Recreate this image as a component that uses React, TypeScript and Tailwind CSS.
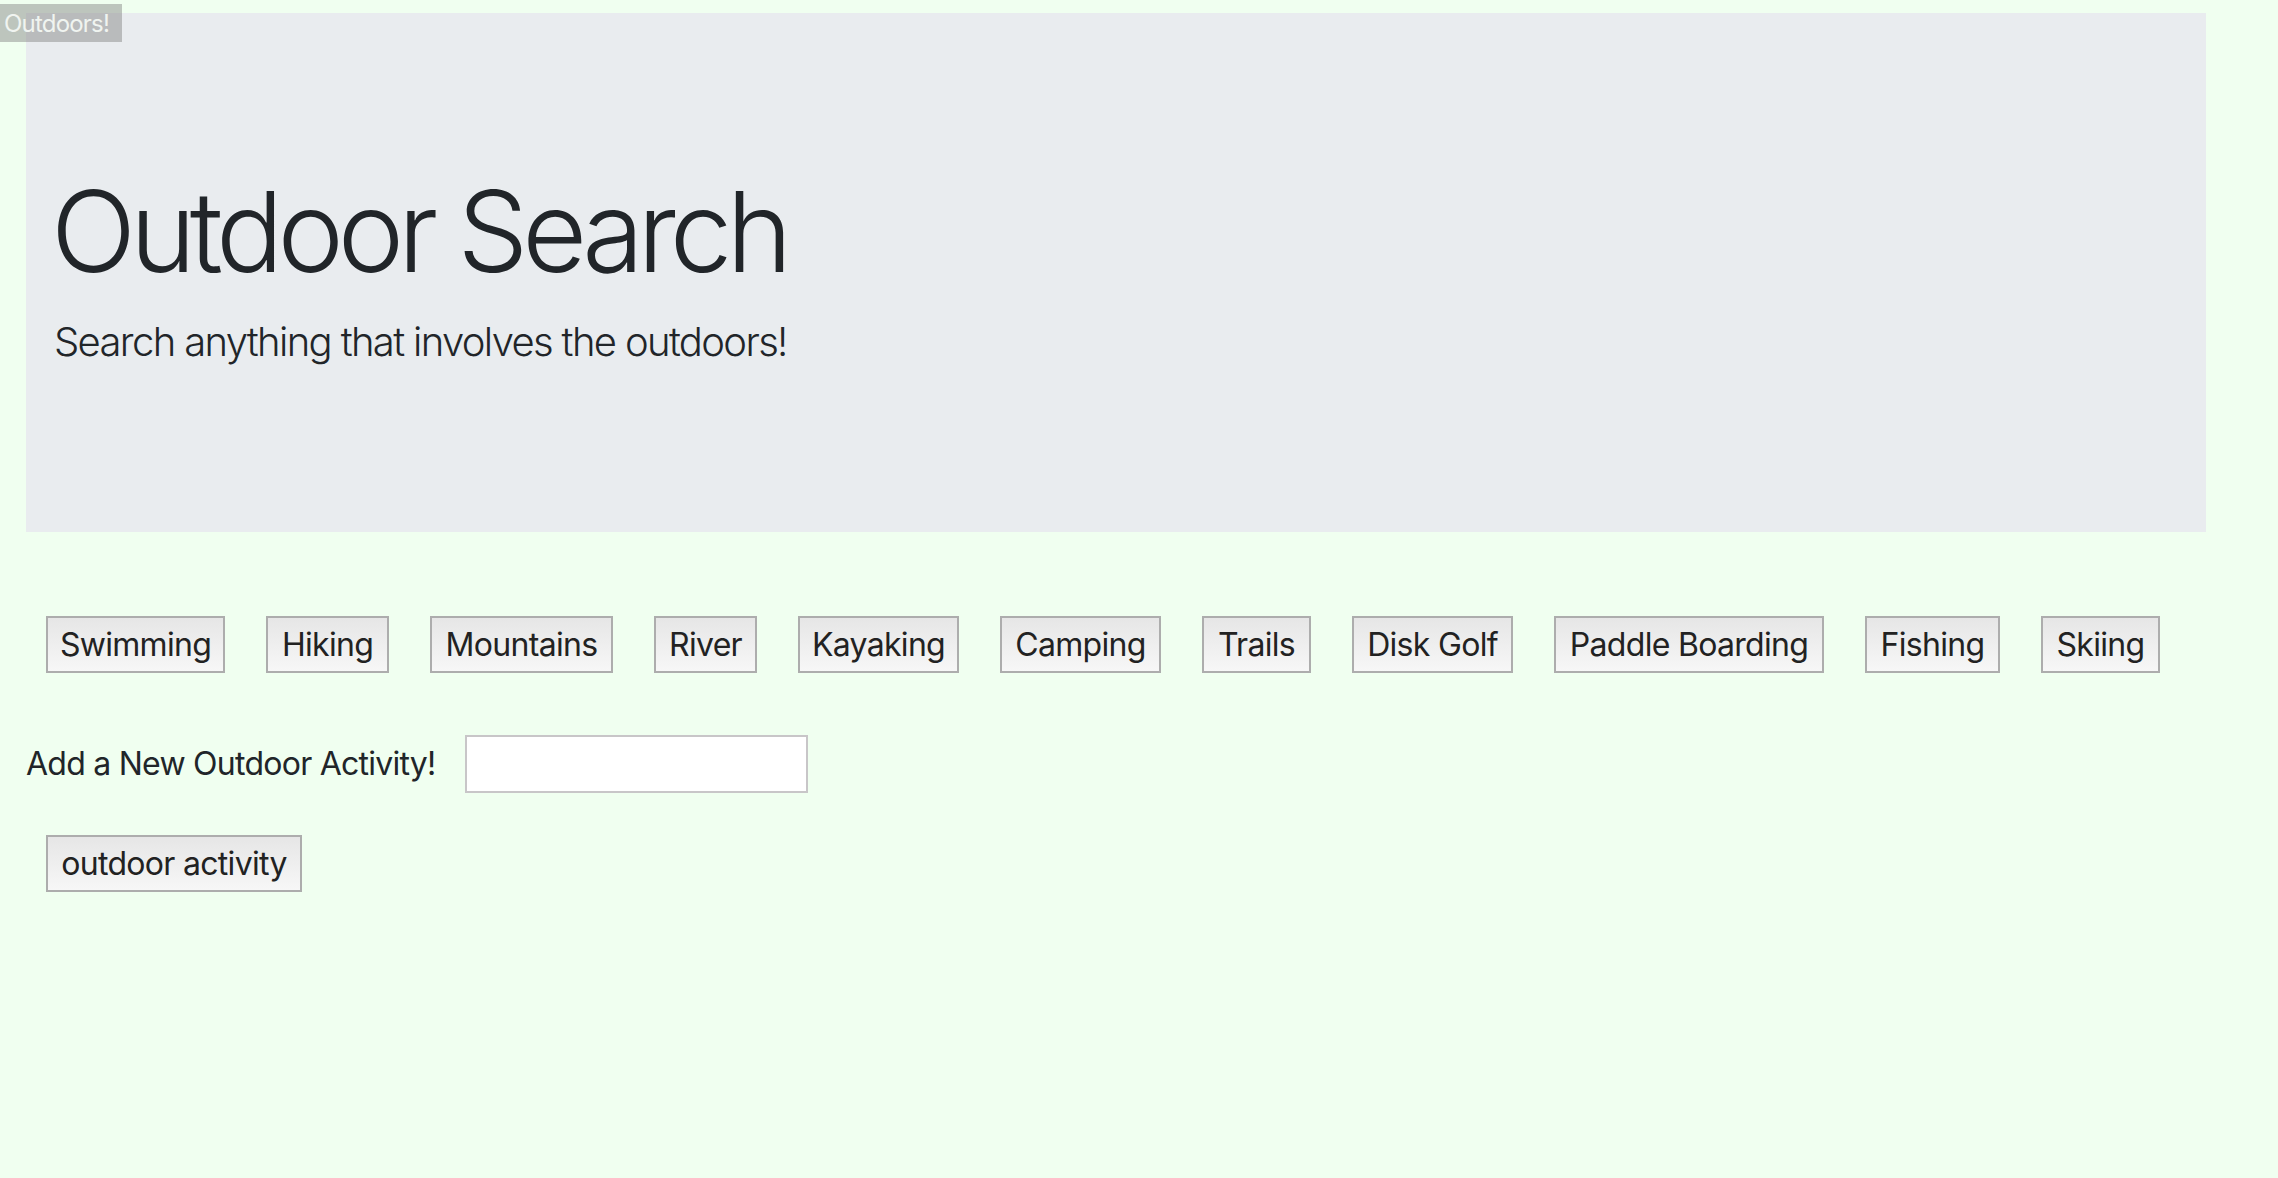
import React from "react";

const activities: { label: string; w: string }[] = [
  { label: "Swimming", w: "w-[179px]" },
  { label: "Hiking", w: "w-[123px]" },
  { label: "Mountains", w: "w-[183px]" },
  { label: "River", w: "w-[103px]" },
  { label: "Kayaking", w: "w-[161px]" },
  { label: "Camping", w: "w-[161px]" },
  { label: "Trails", w: "w-[109px]" },
  { label: "Disk Golf", w: "w-[161px]" },
  { label: "Paddle Boarding", w: "w-[270px]" },
  { label: "Fishing", w: "w-[135px]" },
  { label: "Skiing", w: "w-[119px]" },
];

function Btn({ label, w }: { label: string; w: string }) {
  return (
    <button
      type="button"
      className={`${w} h-[57px] shrink-0 flex items-center justify-center border-2 border-[#adadad] bg-gradient-to-b from-[#e6e6e6] to-[#f7f7f7] text-[32px] leading-none text-[#222222] tracking-[-0.7px] whitespace-nowrap`}
    >
      {label}
    </button>
  );
}

export default function App() {
  return (
    <div className="relative min-h-screen w-full bg-[#f0fff0] font-['Inter','Helvetica_Neue','Liberation_Sans',sans-serif] text-[#212529]">
      <div className="absolute left-0 top-[4px] w-[122px] h-[38px] bg-[#80808075] text-[#f0f4f0] text-[24px] leading-[40px] pl-[4px] tracking-[-0.8px] z-10">
        Outdoors!
      </div>

      <div className="pt-[13px] pl-[26px]">
        <div className="w-[2180px] h-[519px] bg-[#e9ecef] pt-[151px] pl-[25px]">
          <h1 className="text-[112px] leading-[134px] font-light tracking-[-6.1px]">
            Outdoor Search
          </h1>
          <p className="mt-[14px] ml-[3px] text-[40px] leading-[60px] font-light tracking-[-1.65px]">
            Search anything that involves the outdoors!
          </p>
        </div>
      </div>

      <div className="mt-[84px] pl-[46px] flex gap-[41px]">
        {activities.map((a) => (
          <Btn key={a.label} label={a.label} w={a.w} />
        ))}
      </div>

      <div className="mt-[62px] pl-[26px] flex items-center">
        <label className="w-[439px] shrink-0 text-[32px] leading-none text-[#212529] tracking-[-0.75px] whitespace-nowrap">
          Add a New Outdoor Activity!
        </label>
        <input
          type="text"
          className="w-[343px] h-[58px] bg-white border-2 border-[#c8c6c8] outline-none"
        />
      </div>

      <div className="mt-[42px] pl-[46px]">
        <Btn label="outdoor activity" w="w-[256px]" />
      </div>
    </div>
  );
}
